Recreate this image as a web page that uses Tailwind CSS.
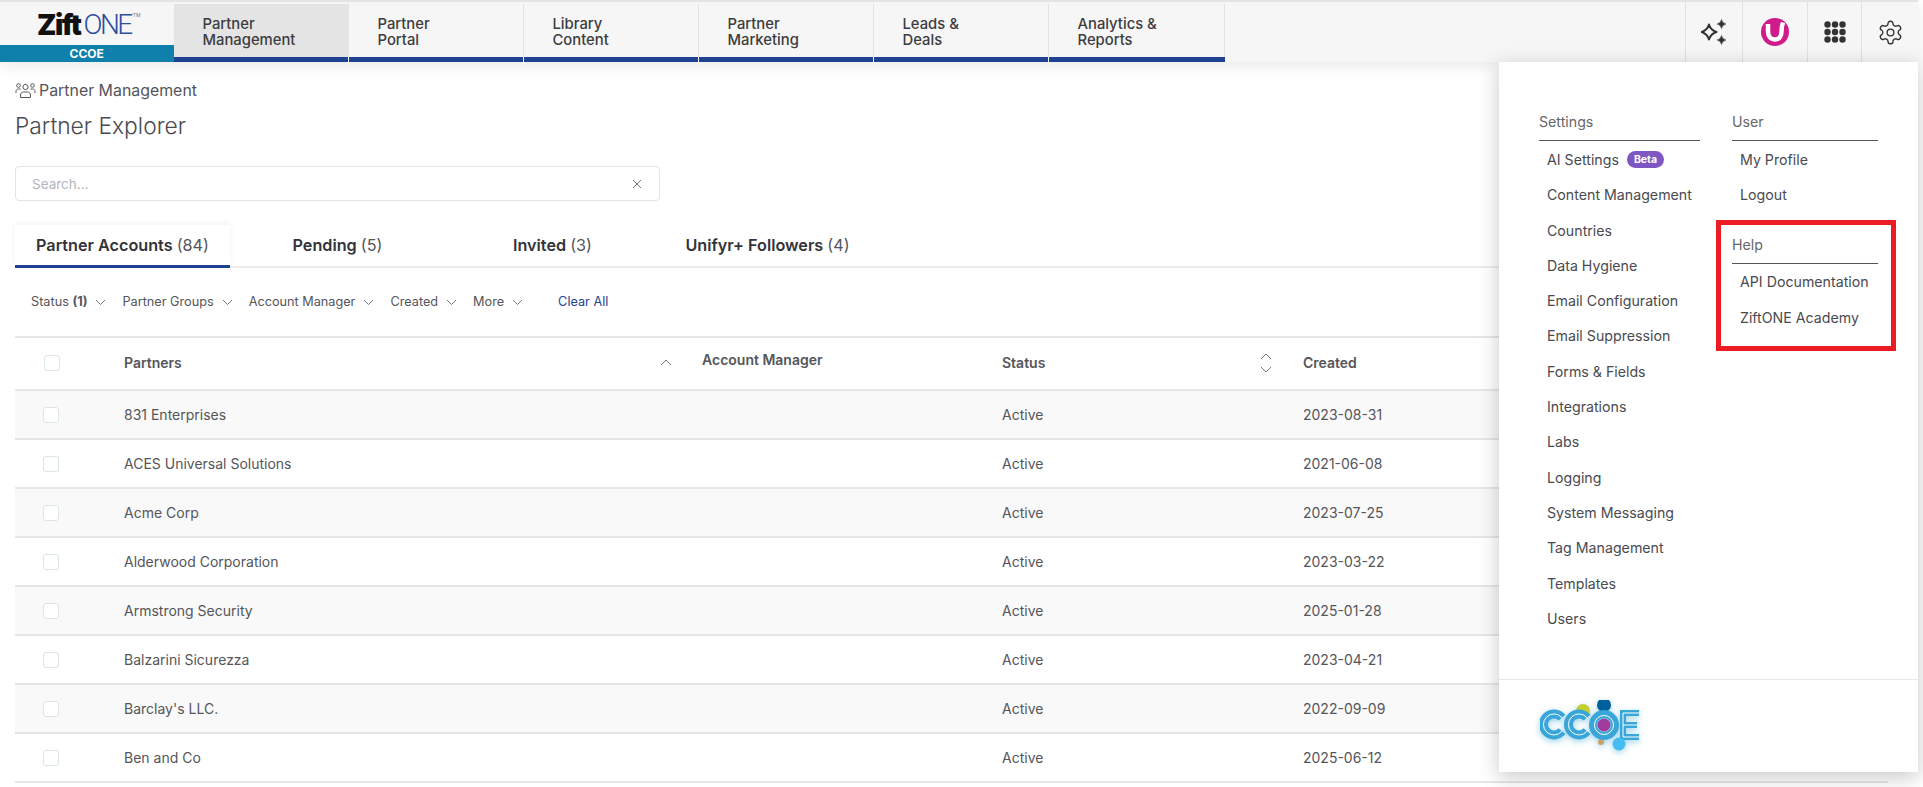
<!DOCTYPE html>
<html lang="en">
<head>
  <meta charset="UTF-8" />
  <meta name="viewport" content="width=device-width, initial-scale=1.0" />
  <title>Partner Explorer</title>
  <script src="https://cdn.jsdelivr.net/npm/@tailwindcss/browser@4"></script>
</head>
<body class="relative h-[787px] overflow-hidden bg-white font-['Inter',sans-serif] text-[#4a4a4f]">

  <!-- Top nav -->
  <header class="relative z-10 flex h-[62px] w-[1918px] border-t-2 border-[#e4e4e4] bg-[#f6f6f6] shadow-[0_4px_14px_rgba(0,0,0,0.09)]">
    <div class="flex w-[173.500px] flex-col">
      <div class="flex h-[43px] items-center justify-center pl-[4px] pt-[3px]">
        <span class="text-[28px] font-black leading-none tracking-[-1.500px] text-[#111]">Zift</span>
        <span class="ml-[3px] font-['Roboto',sans-serif] text-[28px] font-light leading-none tracking-[-2.500px] text-[#2c4f9e]">ONE</span>
        <span class="mb-[20px] ml-[2px] text-[5px] leading-none text-[#777]">TM</span>
      </div>
      <div class="flex h-[17px] items-center justify-center bg-[#0f7fab] text-[12px] font-bold text-white">CCOE</div>
    </div>
    <nav class="flex pt-[2px]">
      <a class="flex w-[175px] flex-col">
        <span class="flex h-[53px] flex-col justify-center bg-[#e4e4e4] pl-[29px] pt-[2px] text-[14.800px] font-medium leading-[16px] text-[#3c3c40]"><span>Partner</span><span>Management</span></span>
        <span class="h-[5px] border-r border-white bg-[#1e4291]"></span>
      </a>
      <a class="flex w-[175px] flex-col">
        <span class="flex h-[53px] flex-col justify-center border-r border-[#e2e2e2] pl-[29px] pt-[2px] text-[14.800px] font-medium leading-[16px] text-[#3c3c40]"><span>Partner</span><span>Portal</span></span>
        <span class="h-[5px] border-r border-white bg-[#1e4291]"></span>
      </a>
      <a class="flex w-[175px] flex-col">
        <span class="flex h-[53px] flex-col justify-center border-r border-[#e2e2e2] pl-[29px] pt-[2px] text-[14.800px] font-medium leading-[16px] text-[#3c3c40]"><span>Library</span><span>Content</span></span>
        <span class="h-[5px] border-r border-white bg-[#1e4291]"></span>
      </a>
      <a class="flex w-[175px] flex-col">
        <span class="flex h-[53px] flex-col justify-center border-r border-[#e2e2e2] pl-[29px] pt-[2px] text-[14.800px] font-medium leading-[16px] text-[#3c3c40]"><span>Partner</span><span>Marketing</span></span>
        <span class="h-[5px] border-r border-white bg-[#1e4291]"></span>
      </a>
      <a class="flex w-[175px] flex-col">
        <span class="flex h-[53px] flex-col justify-center border-r border-[#e2e2e2] pl-[29px] pt-[2px] text-[14.800px] font-medium leading-[16px] text-[#3c3c40]"><span>Leads &amp;</span><span>Deals</span></span>
        <span class="h-[5px] border-r border-white bg-[#1e4291]"></span>
      </a>
      <a class="flex w-[176px] flex-col">
        <span class="flex h-[53px] flex-col justify-center border-r border-[#e2e2e2] pl-[29px] pt-[2px] text-[14.800px] font-medium leading-[16px] text-[#3c3c40]"><span>Analytics &amp;</span><span>Reports</span></span>
        <span class="h-[5px] bg-[#1e4291]"></span>
      </a>
    </nav>
    <div class="ml-auto flex">
      <div class="flex w-[57px] items-center justify-center border-l border-[#e2e2e2]">
        <svg width="26" height="26" viewBox="0 0 26 26" fill="none">
          <path d="M8 5.500Q9.700 11.300 15.500 13 9.700 14.700 8 20.500 6.300 14.700 .5 13 6.300 11.300 8 5.500z" stroke="#333" stroke-width="2" stroke-linejoin="round"/>
          <path d="M20.500 .5Q21.300 4.200 25 5 21.300 5.800 20.500 9.500 19.700 5.800 16 5 19.700 4.200 20.500 .5z" fill="#333" stroke="#333" stroke-width=".5"/>
          <path d="M20.500 16.500Q21.300 20.200 25 21 21.300 21.800 20.500 25.500 19.700 21.800 16 21 19.700 20.200 20.500 16.500z" fill="#333" stroke="#333" stroke-width=".5"/>
        </svg>
      </div>
      <div class="flex w-[65px] items-center justify-center border-l border-[#e2e2e2]">
        <svg width="28" height="30" viewBox="0 0 28 30" fill="none">
          <circle cx="14" cy="15" r="14" fill="#d01c8b"/>
          <path d="M7 7V14.500C7 19.500 10 22.500 14 22.500 18.500 22.500 20.500 19 20.500 14.500 20.500 11 21 8 22 5.500" stroke="#fff" stroke-width="4.500"/>
        </svg>
      </div>
      <div class="flex w-[54px] items-center justify-center border-l border-[#e2e2e2]">
        <svg width="22" height="22" viewBox="0 0 22 22" fill="#333">
          <circle cx="3.500" cy="3.500" r="3.200"/><circle cx="11" cy="3.500" r="3.200"/><circle cx="18.500" cy="3.500" r="3.200"/>
          <circle cx="3.500" cy="11" r="3.200"/><circle cx="11" cy="11" r="3.200"/><circle cx="18.500" cy="11" r="3.200"/>
          <circle cx="3.500" cy="18.500" r="3.200"/><circle cx="11" cy="18.500" r="3.200"/><circle cx="18.500" cy="18.500" r="3.200"/>
        </svg>
      </div>
      <div class="flex w-[57px] items-center justify-center border-l border-[#e2e2e2]">
        <svg width="27" height="27" viewBox="0 0 24 24" fill="none" stroke="#333" stroke-width="1.200" stroke-linecap="round" stroke-linejoin="round">
          <path d="M12.220 2h-.44a2 2 0 0 0-2 2v.18a2 2 0 0 1-1 1.730l-.43.250a2 2 0 0 1-2 0l-.15-.080a2 2 0 0 0-2.730.730l-.22.380a2 2 0 0 0 .730 2.730l.15.100a2 2 0 0 1 1 1.720v.510a2 2 0 0 1-1 1.740l-.15.090a2 2 0 0 0-.730 2.730l.22.380a2 2 0 0 0 2.730.730l.15-.080a2 2 0 0 1 2 0l.43.250a2 2 0 0 1 1 1.730V20a2 2 0 0 0 2 2h.44a2 2 0 0 0 2-2v-.18a2 2 0 0 1 1-1.730l.43-.250a2 2 0 0 1 2 0l.15.080a2 2 0 0 0 2.730-.730l.22-.390a2 2 0 0 0-.730-2.730l-.15-.080a2 2 0 0 1-1-1.740v-.5a2 2 0 0 1 1-1.740l.15-.090a2 2 0 0 0 .730-2.730l-.22-.380a2 2 0 0 0-2.730-.730l-.15.080a2 2 0 0 1-2 0l-.43-.250a2 2 0 0 1-1-1.730V4a2 2 0 0 0-2-2z"/>
          <circle cx="12" cy="12" r="3"/>
        </svg>
      </div>
    </div>
  </header>

  <!-- Page -->
  <main class="pl-[15px]">
    <div class="mt-[20px] flex h-[18px] items-center gap-[3px] text-[15.900px] text-[#55555a]">
      <svg width="21" height="18" viewBox="0 0 21 18" fill="none" stroke="#55555a" stroke-width="1">
        <circle cx="10.500" cy="5" r="2.600"/><circle cx="3.500" cy="3.500" r="1.800"/><circle cx="17.500" cy="3.500" r="1.800"/>
        <path d="M5.500 15.500v-2.500c0-2 1.500-3 3-3h4c1.500 0 3 1 3 3v2.500z"/><path d="M1 11v-1.500c0-1.500 1-2.500 2.500-2.500h2"/><path d="M20 11v-1.500c0-1.500-1-2.500-2.500-2.500h-2"/>
      </svg>
      <span>Partner Management</span>
    </div>
    <h1 class="mt-[12px] h-[28px] text-[22.800px] font-light leading-[28px] text-[#4a4a50]">Partner Explorer</h1>

    <div class="mt-[26px] flex h-[35px] w-[645px] items-center justify-between rounded-[4px] border border-[#dfe5ea] pl-[16px] pr-[16px] pt-[1px] text-[13.500px] text-[#b5b5be]">
      <span>Search...</span>
      <svg width="12" height="12" viewBox="0 0 12 12" stroke="#777" stroke-width="1"><path d="M2 2l8 8M10 2l-8 8"/></svg>
    </div>

    <!-- Tabs -->
    <div class="mt-[24px] flex h-[43px] w-[1873px] border-b-2 border-[#ececec] text-[16.200px] font-semibold text-[#33333a]">
      <div class="flex h-[43px] w-[215px] items-center justify-center border-b-[3px] border-[#1e4291] shadow-[0_-2px_6px_rgba(0,0,0,0.05)]"><span>Partner Accounts <span class="font-normal text-[#55555a]">(84)</span></span></div>
      <div class="flex h-[41px] w-[215px] items-center justify-center"><span>Pending <span class="font-normal text-[#55555a]">(5)</span></span></div>
      <div class="flex h-[41px] w-[215px] items-center justify-center"><span>Invited <span class="font-normal text-[#55555a]">(3)</span></span></div>
      <div class="flex h-[41px] w-[215px] items-center justify-center"><span>Unifyr+ Followers <span class="font-normal text-[#55555a]">(4)</span></span></div>
    </div>

    <!-- Filters -->
    <div class="flex h-[68px] items-center pl-[16px] text-[12.700px] text-[#55555a]">
      <span>Status <b class="font-bold">(1)</b></span>
      <svg class="ml-[8px] mr-[16px]" width="11" height="7" viewBox="0 0 11 7" fill="none" stroke="#777"><path d="M1 1l4.500 4.500L10 1"/></svg>
      <span>Partner Groups</span>
      <svg class="ml-[8px] mr-[16px]" width="11" height="7" viewBox="0 0 11 7" fill="none" stroke="#777"><path d="M1 1l4.500 4.500L10 1"/></svg>
      <span>Account Manager</span>
      <svg class="ml-[8px] mr-[16px]" width="11" height="7" viewBox="0 0 11 7" fill="none" stroke="#777"><path d="M1 1l4.500 4.500L10 1"/></svg>
      <span>Created</span>
      <svg class="ml-[8px] mr-[16px]" width="11" height="7" viewBox="0 0 11 7" fill="none" stroke="#777"><path d="M1 1l4.500 4.500L10 1"/></svg>
      <span>More</span>
      <svg class="ml-[8px]" width="11" height="7" viewBox="0 0 11 7" fill="none" stroke="#777"><path d="M1 1l4.500 4.500L10 1"/></svg>
      <span class="ml-[35px] text-[#1e4291]">Clear All</span>
    </div>

    <!-- Table -->
    <table class="w-[1873px] table-fixed border-collapse text-[14px] text-[#55555a]">
      <colgroup><col class="w-[109px]" /><col class="w-[578px]" /><col class="w-[300px]" /><col class="w-[301px]" /><col /></colgroup>
      <thead class="font-semibold">
        <tr class="h-[53px] border-y-2 border-[#e4e7ea] text-left">
          <th class="pb-[2px] pl-[29px]"><span class="block size-[16px] rounded-[3px] border border-[#dbe5e5]"></span></th>
          <th class="pb-[2px] font-semibold"><div class="flex items-center justify-between pr-[30px]"><span>Partners</span><svg width="12" height="7" viewBox="0 0 12 7" fill="none" stroke="#777"><path d="M1 6l5-5 5 5"/></svg></div></th>
          <th class="pb-[2px] font-semibold"><span class="relative -top-[3px]">Account Manager</span></th>
          <th class="pb-[2px] font-semibold"><div class="flex items-center justify-between pr-[31px]"><span>Status</span><svg width="12" height="20" viewBox="0 0 12 20" fill="none" stroke="#777"><path d="M1 6l5-5 5 5M1 14l5 5 5-5"/></svg></div></th>
          <th class="pb-[2px] font-semibold">Created</th>
        </tr>
      </thead>
      <tbody>
        <tr class="h-[49px] border-b-2 border-[#e4e7ea] bg-[#f9f9f9]"><td class="pl-[28px]"><span class="block size-[16px] rounded-[3px] border border-[#dbe5e5] bg-white"></span></td><td>831 Enterprises</td><td></td><td>Active</td><td>2023-08-31</td></tr>
        <tr class="h-[49px] border-b-2 border-[#e4e7ea]"><td class="pl-[28px]"><span class="block size-[16px] rounded-[3px] border border-[#dbe5e5] bg-white"></span></td><td>ACES Universal Solutions</td><td></td><td>Active</td><td>2021-06-08</td></tr>
        <tr class="h-[49px] border-b-2 border-[#e4e7ea] bg-[#f9f9f9]"><td class="pl-[28px]"><span class="block size-[16px] rounded-[3px] border border-[#dbe5e5] bg-white"></span></td><td>Acme Corp</td><td></td><td>Active</td><td>2023-07-25</td></tr>
        <tr class="h-[49px] border-b-2 border-[#e4e7ea]"><td class="pl-[28px]"><span class="block size-[16px] rounded-[3px] border border-[#dbe5e5] bg-white"></span></td><td>Alderwood Corporation</td><td></td><td>Active</td><td>2023-03-22</td></tr>
        <tr class="h-[49px] border-b-2 border-[#e4e7ea] bg-[#f9f9f9]"><td class="pl-[28px]"><span class="block size-[16px] rounded-[3px] border border-[#dbe5e5] bg-white"></span></td><td>Armstrong Security</td><td></td><td>Active</td><td>2025-01-28</td></tr>
        <tr class="h-[49px] border-b-2 border-[#e4e7ea]"><td class="pl-[28px]"><span class="block size-[16px] rounded-[3px] border border-[#dbe5e5] bg-white"></span></td><td>Balzarini Sicurezza</td><td></td><td>Active</td><td>2023-04-21</td></tr>
        <tr class="h-[49px] border-b-2 border-[#e4e7ea] bg-[#f9f9f9]"><td class="pl-[28px]"><span class="block size-[16px] rounded-[3px] border border-[#dbe5e5] bg-white"></span></td><td>Barclay's LLC.</td><td></td><td>Active</td><td>2022-09-09</td></tr>
        <tr class="h-[49px] border-b-2 border-[#e4e7ea]"><td class="pl-[28px]"><span class="block size-[16px] rounded-[3px] border border-[#dbe5e5] bg-white"></span></td><td>Ben and Co</td><td></td><td>Active</td><td>2025-06-12</td></tr>
      </tbody>
    </table>
  </main>

  <!-- Settings panel -->
  <aside class="absolute left-[1499px] top-[62px] z-20 w-[419px] bg-white text-[14.200px] text-[#4a4a4f] shadow-[0_5px_20px_rgba(0,0,0,0.22)]">
    <div class="flex h-[617px] gap-[32px] pl-[40px] pt-[50px]">
      <div class="w-[161px]">
        <div class="border-b border-[#55555a] pb-[8px] leading-[20px] text-[#66666b]">Settings</div>
        <ul class="mt-[1px] pl-[8px]">
          <li class="flex h-[35.300px] items-center">AI Settings<span class="ml-[8px] rounded-full bg-[#7e57c2] px-[7px] py-[2.500px] text-[10.500px] font-bold leading-[12px] text-white">Beta</span></li>
          <li class="flex h-[35.300px] items-center">Content Management</li>
          <li class="flex h-[35.300px] items-center">Countries</li>
          <li class="flex h-[35.300px] items-center">Data Hygiene</li>
          <li class="flex h-[35.300px] items-center">Email Configuration</li>
          <li class="flex h-[35.300px] items-center">Email Suppression</li>
          <li class="flex h-[35.300px] items-center">Forms &amp; Fields</li>
          <li class="flex h-[35.300px] items-center">Integrations</li>
          <li class="flex h-[35.300px] items-center">Labs</li>
          <li class="flex h-[35.300px] items-center">Logging</li>
          <li class="flex h-[35.300px] items-center">System Messaging</li>
          <li class="flex h-[35.300px] items-center">Tag Management</li>
          <li class="flex h-[35.300px] items-center">Templates</li>
          <li class="flex h-[35.300px] items-center">Users</li>
        </ul>
      </div>
      <div class="w-[146px]">
        <div class="border-b border-[#55555a] pb-[8px] leading-[20px] text-[#66666b]">User</div>
        <ul class="mt-[1px] pl-[8px]">
          <li class="flex h-[35.300px] items-center">My Profile</li>
          <li class="flex h-[35.300px] items-center">Logout</li>
        </ul>
        <!-- highlighted box -->
        <div class="-ml-[16px] -mr-[18px] mt-[7.400px] border-[5px] border-[#ed1c24] pb-[10px] pl-[11px] pr-[13px] pt-[10px]">
          <div class="border-b border-[#55555a] pb-[8px] leading-[20px] text-[#66666b]">Help</div>
          <ul class="pl-[8px]">
            <li class="flex h-[36px] items-center">API Documentation</li>
            <li class="flex h-[36px] items-center">ZiftONE Academy</li>
          </ul>
        </div>
      </div>
    </div>
    <div class="flex h-[93px] items-start border-t border-[#e8e8e8] pl-[41px] pt-[20px]">
      <svg class="drop-shadow-[0_2px_3px_rgba(56,166,216,0.5)]" width="102" height="54" viewBox="0 0 102 54" fill="none">
        <circle cx="43" cy="11" r="7" fill="#c3cf2c"/>
        <circle cx="64" cy="5" r="7" fill="#005f9e"/>
        <circle cx="61" cy="42" r="3" fill="#c9a067"/>
        <path d="M22 17.700A10.500 10.500 0 1 0 22 31.200" stroke="#38a6d8" stroke-width="9"/>
        <path d="M22 17.700A10.500 10.500 0 1 0 22 31.200" stroke="#fff" stroke-width="1"/>
        <path d="M47 17.700A10.500 10.500 0 1 0 47 31.200" stroke="#38a6d8" stroke-width="9"/>
        <path d="M47 17.700A10.500 10.500 0 1 0 47 31.200" stroke="#fff" stroke-width="1"/>
        <circle cx="64" cy="25" r="11" stroke="#38a6d8" stroke-width="8"/>
        <circle cx="64" cy="25" r="9.500" stroke="#fff" stroke-width="1"/>
        <circle cx="64" cy="25" r="6.500" fill="#a23c9c"/>
        <path d="M99 13H83v24h16M83 25h14" stroke="#38a6d8" stroke-width="6"/>
        <path d="M99 13H83v24h16M83 25h14" stroke="#fff" stroke-width="1"/>
        <circle cx="79" cy="44" r="6.500" fill="#45bdf0"/>
      </svg>
    </div>
  </aside>
</body>
</html>
